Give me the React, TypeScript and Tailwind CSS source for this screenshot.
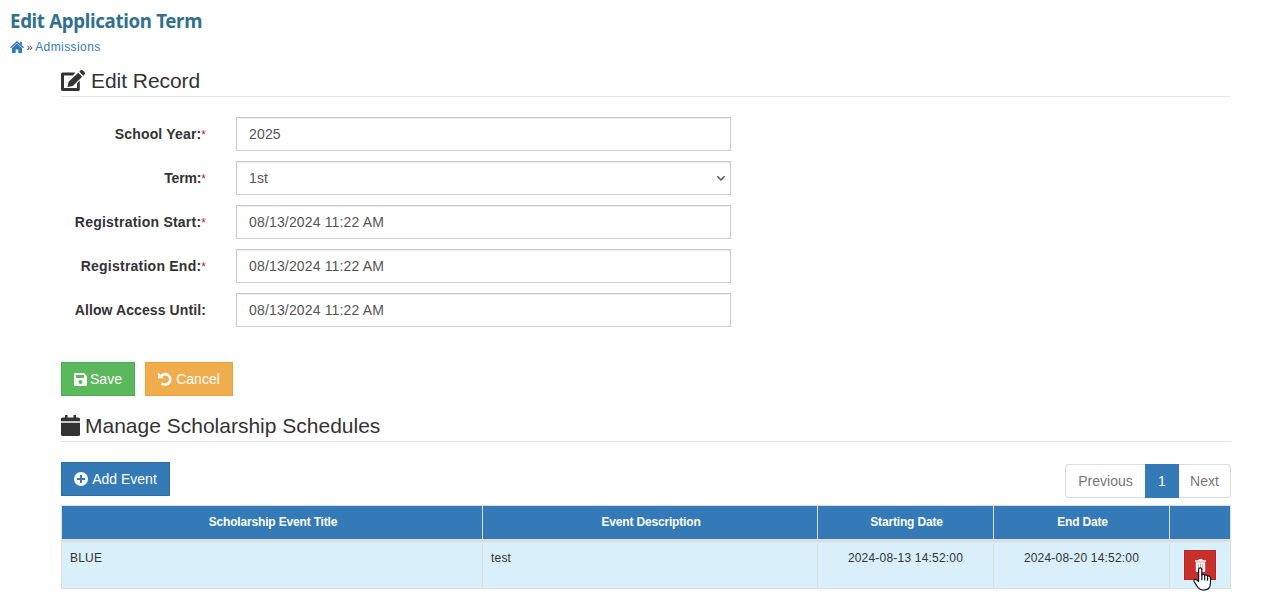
const fields = [
  { label: "School Year:", value: "2025", required: true, tracking: "tracking-[0.17px]" },
  { label: "Term:", value: "1st", required: true, select: true, tracking: "tracking-[-0.15px]" },
  { label: "Registration Start:", value: "08/13/2024 11:22 AM", required: true, tracking: "tracking-[0.23px]" },
  { label: "Registration End:", value: "08/13/2024 11:22 AM", required: true, tracking: "tracking-[0.23px]" },
  { label: "Allow Access Until:", value: "08/13/2024 11:22 AM", required: false, tracking: "tracking-[0.1px]" },
];

const inputClass =
  "w-[495px] h-[34px] px-3 border border-[#ccc] bg-white text-[#555] text-[14px] leading-5 tracking-[0.16px] shadow-[inset_0_1px_1px_rgba(0,0,0,0.075)] outline-none";

function HomeIcon() {
  return (
    <svg className="h-[12px] w-[14px]" viewBox="0 0 14 12" fill="#337ab7">
      <path d="M7 0 0 6.200l.9 1L7 1.900l6.100 5.300.9-1-2.200-1.900V.7H9.900v1.900z" />
      <path d="M7 2.500 2 6.900V12h3.700V8.500h2.600V12H12V6.900z" />
    </svg>
  );
}

function EditIcon() {
  return (
    <svg className="h-[22px] w-6 shrink-0" viewBox="0 0 24 22" fill="#333">
      <path d="M1.500 2.500h13l-2.700 3H3V18h13v-4.600l2.800-2.800V19.500a1.500 1.500 0 0 1-1.500 1.500H1.500A1.500 1.500 0 0 1 0 19.500V4a1.500 1.500 0 0 1 1.500-1.500z" />
      <path d="m17.300 2.800 3.900 3.900L11.800 16l-5.300 1.100 1.100-5.300z" />
      <path d="m18.300 1.800 1.200-1.200a1.800 1.800 0 0 1 2.500 0L23.400 2a1.800 1.800 0 0 1 0 2.500l-1.200 1.200z" />
    </svg>
  );
}

function CalendarIcon() {
  return (
    <svg className="h-[21px] w-[19px] shrink-0" viewBox="0 0 19 21" fill="#333">
      <path d="M4 0h2.500v2.500h6V0H15v2.500h2.500A1.500 1.500 0 0 1 19 4v2.300H0V4a1.500 1.500 0 0 1 1.500-1.500H4z" />
      <path d="M0 7.700h19v11.800a1.500 1.500 0 0 1-1.500 1.500h-16A1.500 1.500 0 0 1 0 19.500z" />
    </svg>
  );
}

function SaveIcon() {
  return (
    <svg className="h-[13px] w-[13px]" viewBox="0 0 13 13" fill="#fff" fillRule="evenodd">
      <path d="M1.200 0h8.600L13 3.200v8.600a1.200 1.200 0 0 1-1.200 1.200H1.200A1.200 1.200 0 0 1 0 11.800V1.200A1.200 1.200 0 0 1 1.200 0zM2 2v3h8V2zm4.500 5a2 2 0 1 0 0 4 2 2 0 0 0 0-4z" />
    </svg>
  );
}

function UndoIcon() {
  return (
    <svg className="h-[14px] w-[14px]" viewBox="0 0 14 14" fill="none">
      <path d="M2.800 4.300A5.200 5.200 0 1 1 3.600 11.200" stroke="#fff" strokeWidth="2.600" />
      <path d="M0 .5v5.800h5.800z" fill="#fff" />
    </svg>
  );
}

function PlusIcon() {
  return (
    <svg className="h-[14px] w-[14px]" viewBox="0 0 14 14">
      <circle cx="7" cy="7" r="7" fill="#fff" />
      <path d="M7 3v8M3 7h8" stroke="#337ab7" strokeWidth="2" />
    </svg>
  );
}

function TrashIcon() {
  return (
    <svg className="h-[13px] w-[11px]" viewBox="0 0 11 13">
      <path d="M0 1.200h3.300L4 0h3l.7 1.200H11v1.500H0zM.8 3.300h9.400V11.800A1.200 1.200 0 0 1 9 13H2A1.200 1.200 0 0 1 .8 11.800z" fill="#fff" />
      <path d="M3.300 4.600v6.700M5.500 4.600v6.700M7.700 4.600v6.700" stroke="#c9302c" strokeOpacity=".7" strokeWidth=".7" />
    </svg>
  );
}

function HandCursor() {
  return (
    <svg
      className="absolute left-[8px] top-[16px] h-[24px] w-[19px]"
      viewBox="0 0 19 24"
      fill="#fff"
      stroke="#111827"
      strokeWidth="1.2"
      strokeLinejoin="round"
      strokeLinecap="round"
    >
      <path d="M5.600 14.500V2.400a1.600 1.600 0 0 1 3.200 0v5.500c.5-.9 2.700-.8 2.900.6.500-.8 2.600-.7 2.900.8.700-.8 2.900-.4 2.900 1.300v5.200c0 4.900-2.400 7.300-7 7.300-3.400 0-5-1.300-6.300-3.800L1.100 14.600c-.8-1.600 1-2.800 2.400-1.700z" />
      <path d="M8.800 7.900v4.800M11.700 8.500v4.400M14.600 9.300v3.900" fill="none" />
    </svg>
  );
}

export default function App() {
  return (
    <div className="h-[593px] overflow-hidden bg-white px-[10px] pt-[9px] font-['Liberation_Sans',Arial,sans-serif] text-sm leading-5 text-[#333]">
      <h1 className="h-[26px] whitespace-nowrap font-['Noto_Sans',sans-serif] text-[18.700px] font-bold leading-6 tracking-[-0.330px] text-[#31708f]">
        Edit Application Term
      </h1>
      <nav className="flex h-6 items-center gap-[2.500px] text-[13px] leading-6">
        <HomeIcon />
        <span className="text-[11px]">»</span>
        <a href="#" className="text-[12px] tracking-[0.42px] text-[#337ab7]">
          Admissions
        </a>
      </nav>

      <main className="ml-[51px] w-[1170px]">
        <h2 className="flex h-[38px] items-center gap-[6px] border-b border-[#e5e5e5] pt-[6px] text-[21px] tracking-[-0.05px]">
          <EditIcon />
          Edit Record
        </h2>

        {/* Record form */}
        <form className="mt-5 flex flex-col gap-[10px]">
          {fields.map((f) => (
            <div key={f.label} className="flex h-[34px] items-center gap-[30px]">
              <label className={`w-[145px] whitespace-nowrap text-right text-[14px] font-bold ${f.tracking}`}>
                {f.label}
                {f.required && <span className="text-[12px] font-normal tracking-normal text-[#b52b27]">*</span>}
              </label>
              {f.select ? (
                <div className="relative">
                  <select className={`${inputClass} block appearance-none`} defaultValue={f.value}>
                    <option>{f.value}</option>
                  </select>
                  <svg
                    className="absolute right-[5px] top-[14px] h-[7px] w-[10px]"
                    viewBox="0 0 10 7"
                    fill="none"
                    stroke="#555"
                    strokeWidth="1.500"
                  >
                    <path d="M1.300 1.300 5 5l3.700-3.700" />
                  </svg>
                </div>
              ) : (
                <input className={inputClass} defaultValue={f.value} />
              )}
            </div>
          ))}
        </form>

        <div className="mt-[35px] flex gap-[10px] text-white">
          <button className="flex h-[34px] w-[74px] items-center justify-center gap-[3px] border border-[#4cae4c] bg-[#5cb85c]">
            <SaveIcon />
            Save
          </button>
          <button className="flex h-[34px] w-[88px] items-center justify-center gap-1 border border-[#eea236] bg-[#f0ad4e]">
            <UndoIcon />
            Cancel
          </button>
        </div>

        <h2 className="mt-2 flex h-[38px] items-center gap-[5px] border-b border-[#e5e5e5] pt-[6px] text-[21px]">
          <CalendarIcon />
          Manage Scholarship Schedules
        </h2>

        <div className="mt-5 flex h-[43px] items-start justify-between">
          <button className="flex h-[34px] w-[109px] items-center justify-center gap-1 border border-[#2e6da4] bg-[#337ab7] text-white">
            <PlusIcon />
            Add Event
          </button>
          <div className="mt-[2px] flex h-[34px] text-[#777]">
            <button className="w-[80px] rounded-l border border-r-0 border-[#ddd]">Previous</button>
            <button className="w-[34px] bg-[#337ab7] text-white">1</button>
            <button className="w-[52px] rounded-r border border-l-0 border-[#ddd]">Next</button>
          </div>
        </div>

        {/* Schedule table */}
        <table className="w-[1170px] table-fixed border-separate border-spacing-0 border-l border-t border-[#ddd] text-xs">
          <colgroup>
            <col className="w-[421px]" />
            <col className="w-[335px]" />
            <col className="w-[176px]" />
            <col className="w-[176px]" />
            <col className="w-[61px]" />
          </colgroup>
          <thead>
            <tr className="h-[36px] bg-[#337ab7] tracking-[-0.170px] text-white [&>th]:border-b-3 [&>th]:border-r [&>th]:border-[#ddd] [&>th]:p-0 [&>th]:pb-[2px] [&>th]:pl-[2px]">
              <th>Scholarship Event Title</th>
              <th>Event Description</th>
              <th>Starting Date</th>
              <th>End Date</th>
              <th></th>
            </tr>
          </thead>
          <tbody>
            <tr className="h-[47px] bg-[#d9f0fa] align-top tracking-[0.2px] [&>td]:border-b [&>td]:border-r [&>td]:border-[#ddd] [&>td]:px-2 [&>td]:pb-0 [&>td]:pt-2">
              <td>BLUE</td>
              <td>test</td>
              <td className="text-center">2024-08-13 14:52:00</td>
              <td className="text-center">2024-08-20 14:52:00</td>
              <td>
                <button className="relative ml-[6px] flex h-[30px] w-8 items-center justify-center border border-[#ac2925] bg-[#c9302c] text-white">
                  <TrashIcon />
                  <HandCursor />
                </button>
              </td>
            </tr>
          </tbody>
        </table>
      </main>
    </div>
  );
}
